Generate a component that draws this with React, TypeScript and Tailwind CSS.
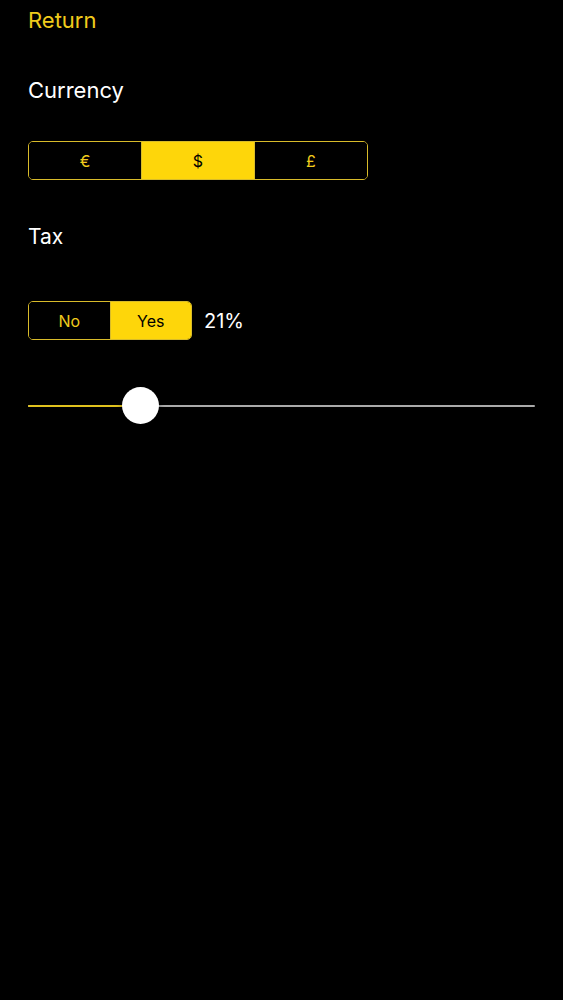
import { useState } from 'react';

const CURRENCIES = ['€', '$', '£'] as const;

export default function App() {
  const [currency, setCurrency] = useState<(typeof CURRENCIES)[number]>('$');
  const [tax, setTax] = useState(true);
  const [rate] = useState(21);

  return (
    <div
      className="min-h-[1000px] w-full bg-black px-7 text-white"
      style={{ fontFamily: 'Inter, "Noto Sans", sans-serif' }}
    >
      <div className="pt-[6px] text-[22px] leading-[28px] text-[#f0cb1c]">Return</div>

      <div className="mt-[42px] text-[22px] leading-[28px]">Currency</div>

      {/* Currency selector */}
      <div className="mt-[37px] flex h-[39px] w-[340px] overflow-hidden rounded-[5px] border-[1.5px] border-[#d8bb2a]">
        {CURRENCIES.map((c, i) => (
          <button
            key={c}
            onClick={() => setCurrency(c)}
            className={`flex flex-1 items-center justify-center text-[16px] ${
              i > 0 ? 'border-l-[1.5px] border-[#d8bb2a]' : ''
            } ${currency === c ? 'bg-[#fed60a] text-black' : 'bg-black text-[#f0cb1c]'}`}
          >
            {c}
          </button>
        ))}
      </div>

      <div className="mt-[43px] text-[21px] leading-[28px]">Tax</div>

      {/* Tax toggle */}
      <div className="mt-[50px] flex items-center gap-3">
        <div className="flex h-[39px] w-[164px] overflow-hidden rounded-[5px] border-[1.5px] border-[#d8bb2a]">
          <button
            onClick={() => setTax(false)}
            className={`flex flex-1 items-center justify-center text-[16px] ${
              !tax ? 'bg-[#fed60a] text-black' : 'bg-black text-[#f0cb1c]'
            }`}
          >
            No
          </button>
          <button
            onClick={() => setTax(true)}
            className={`flex flex-1 items-center justify-center border-l-[1.5px] border-[#d8bb2a] text-[16px] ${
              tax ? 'bg-[#fed60a] text-black' : 'bg-black text-[#f0cb1c]'
            }`}
          >
            Yes
          </button>
        </div>
        <span className="text-[20px]">{rate}%</span>
      </div>

      {/* Rate slider */}
      <div className="relative mt-[47px] h-[38px] w-[507px]">
        <div className="absolute left-0 right-0 top-[18px] h-[2px] rounded-full bg-[#aaaaaa]" />
        <div className="absolute left-0 top-[18px] h-[2px] w-[112px] rounded-full bg-[#e0c21e]" />
        <div className="absolute left-[94px] top-0 h-[37px] w-[37px] rounded-full bg-white shadow-[0_2px_6px_rgba(0,0,0,0.4)]" />
      </div>
    </div>
  );
}
